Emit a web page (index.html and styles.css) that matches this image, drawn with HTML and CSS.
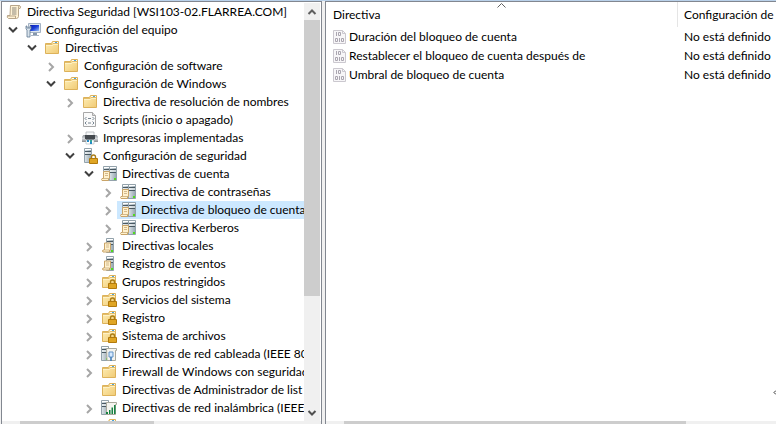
FILE: index.html
```html
<!DOCTYPE html>
<html lang="es">
<head>
<meta charset="utf-8">
<title>Editor de directivas</title>
<link rel="stylesheet" href="styles.css">
</head>
<body>
<svg class="defs" aria-hidden="true">
  <defs>
    <linearGradient id="gold" x1="0" y1="0" x2="1" y2="1"><stop offset="0" stop-color="#fff0b8"/><stop offset="1" stop-color="#f0ca74"/></linearGradient>
    <linearGradient id="steel" x1="0" y1="0" x2="1" y2="0"><stop offset="0" stop-color="#dfe7eb"/><stop offset="1" stop-color="#94a4ae"/></linearGradient>
    <linearGradient id="silver" x1="0" y1="0" x2="0" y2="1"><stop offset="0" stop-color="#8d9297"/><stop offset=".5" stop-color="#d5d8db"/><stop offset="1" stop-color="#85898d"/></linearGradient>
    <linearGradient id="blue" x1="0" y1="0" x2="1" y2="1"><stop offset="0" stop-color="#0719b0"/><stop offset=".5" stop-color="#1c3fd8"/><stop offset="1" stop-color="#9cc4f8"/></linearGradient>
  </defs>
  <symbol id="open" viewBox="0 0 10 8"><path d="M1 1.500 5 5.500 9 1.500" fill="none" stroke="#404040" stroke-width="2"/></symbol>
  <symbol id="closed" viewBox="0 0 8 10"><path d="M2 1 6 5 2 9" fill="none" stroke="#a6a6a6" stroke-width="2"/></symbol>
  <symbol id="folder" viewBox="0 0 16 16">
    <path d="M1.500 3.500h6l1-2h6v12h-13z" fill="url(#gold)" stroke="#ddb25a"/>
    <path d="M9 2h5v1h-5z" fill="#fffdf4"/><path d="M11 2h2v1h-2z" fill="#4aa3dc"/>
    <path d="M2 4.500h6l1-1h5.500" fill="none" stroke="#e3bd6a"/><path d="M2 5.500h6.500l1-1h4.500" fill="none" stroke="#fff5cf" stroke-width=".8"/>
  </symbol>
  <symbol id="lock" viewBox="0 0 9 10">
    <path d="M2.500 5v-2a2 2 0 0 1 4 0v2" fill="none" stroke="#a97c16" stroke-width="1.400"/>
    <path d="M.5 4.500h8v5h-8z" fill="#efb52e" stroke="#b27a0c"/><path d="M1 6h7M1 8h7" stroke="#c98f18" stroke-width=".8"/>
  </symbol>
  <symbol id="lockfolder" viewBox="0 0 16 16"><use href="#folder" width="16" height="16"/><use href="#lock" x="7" y="5" width="9" height="10"/></symbol>
  <symbol id="tower" viewBox="0 0 8 15">
    <path d="M.5 .5h7v14h-7z" fill="url(#steel)" stroke="#93a2ab"/>
    <path d="M1 1h6v1h-6z" fill="#fff"/><path d="M1 3.500h6M1 6.500h6" stroke="#4a5962"/><path d="M1 5h6" stroke="#f4f7f8"/>
    <path d="M5 12h2v2h-2z" fill="#50dc1e"/>
  </symbol>
  <symbol id="sheet" viewBox="0 0 9 10">
    <path d="M2.500 .5h6v7h-1v2h-6.500q-1-1 0-2h1.500z" fill="#fff1cd" stroke="#c9a468"/>
    <path d="M4 2.500h3M4 4.500h3M3 7.500h4" stroke="#d3b98c"/>
  </symbol>
  <symbol id="servers" viewBox="0 0 16 16"><use href="#tower" x="2" y="0" width="8" height="15"/><use href="#tower" x="8" y="0" width="8" height="15"/><use href="#sheet" x="0" y="5" width="9" height="10"/></symbol>
  <symbol id="server" viewBox="0 0 16 16"><use href="#tower" x="5" y="0" width="8" height="15"/><use href="#sheet" x="1" y="4" width="9" height="11"/></symbol>
  <symbol id="lockserver" viewBox="0 0 16 16"><use href="#tower" x="2" y="0" width="8" height="15"/><use href="#lock" x="7" y="6" width="9" height="10"/></symbol>
  <symbol id="scroll" viewBox="0 0 16 16">
    <path d="M4.500 1.500h9q2 1 .5 3h-1.500v8q-.5 2-2 2h-8q-2-1-1-3h2.500z" fill="#fff2d4" stroke="#b9a68a"/>
    <path d="M12.500 4.500v-2q.5-1 1.500-.5M1.500 12h8v2" fill="none" stroke="#b9a68a"/>
    <path d="M6 4h4.500M6 6h4.500M6 8h4.500M6 10h4.500" stroke="#8c877c"/>
  </symbol>
  <symbol id="computer" viewBox="0 0 16 16">
    <path d="M3.500 1.500h12v9h-12z" fill="#dfe7ef" stroke="#a4b2c3"/><path d="M5 3h9v6h-9z" fill="url(#blue)"/>
    <path d="M8 11h4v2h-4z" fill="#8698ac"/><path d="M6 13h8v1h-8z" fill="#a9b6c5"/>
    <path d="M1 4v3l1 1v7h3v-7l1-1v-3h-1v2h-3v-2z" fill="#d9e3ec" stroke="#617a93" stroke-width=".8"/>
  </symbol>
  <symbol id="script" viewBox="0 0 16 16">
    <path d="M1.500 .5h9l3 3v11h-12z" fill="#fafafa" stroke="#a8a8a8"/><path d="M10.500 .5v3h3" fill="#ddd" stroke="#a8a8a8"/>
    <path d="M4.500 5 3 6.500 4.500 8M10.500 5 12 6.500 10.500 8M4.500 9.500 3 11 4.500 12.500M10.500 9.500 12 11 10.500 12.500M6 6.500h3M6 11h3" fill="none" stroke="#687784" stroke-width=".9"/>
  </symbol>
  <symbol id="printer" viewBox="0 0 16 16">
    <path d="M0 6.500 1.500 5h13L16 6.500V12H0z" fill="url(#silver)"/>
    <path d="M4 2h8v4H4z" fill="#f6f7f8" stroke="#b0b4b8" stroke-width=".8"/>
    <path d="M3 5h10v4H3z" fill="#44494e"/><path d="M4 9h8v1H4z" fill="#6d7378"/>
    <path d="M4 10h8v4H4z" fill="#fff" stroke="#a9b5bd" stroke-width=".6"/><path d="M5 10h2v2H5zM8 12h2v2H8z" fill="#238bc5"/><path d="M8 10h2v2H8z" fill="#31a59a"/>
  </symbol>
  <symbol id="wired" viewBox="0 0 16 16">
    <use href="#tower" x="0" y="0" width="8" height="15"/><path d="M5.500 2.500h10v2h-1v10h-8.500z" fill="#f4f4ef" stroke="#aaa99d"/>
    <path d="M8 6h4v5h-4z" fill="#d6eaff" stroke="#6292c5"/><path d="M10 11v4" stroke="#3977b7" stroke-width="1.500"/>
  </symbol>
  <symbol id="wireless" viewBox="0 0 16 16">
    <use href="#tower" x="0" y="0" width="8" height="15"/><path d="M5.500 2.500h10v2h-1v10h-9z" fill="#f4f4ef" stroke="#aaa99d"/>
    <path d="M5 12h2v2h-2zM8 10h1.500v4h-1.500zM10.500 7.500h1.500v6.500h-1.500zM13 5h1.500v9h-1.500z" fill="#168342"/>
  </symbol>
  <symbol id="binary" viewBox="0 0 14 14">
    <path d="M.5 .5h9l3 3v10h-12z" fill="#f7f6f8" stroke="#cbc8cf"/><path d="M9.500 .5v3h3" fill="none" stroke="#cbc8cf"/>
    <path d="M3.500 2v4M5.500 2.500h2v3h-2zM2.500 8.500h2v3h-2zM6.500 8v4M8.500 8.500h2v3h-2z" fill="none" stroke="#aaa6b0"/>
  </symbol>
</svg>

<main class="console">
  <section class="pane tree-pane" aria-label="Árbol de consola">
    <div class="pane-body">
      <nav class="tree">
        <div class="row root"><svg class="icon"><use href="#scroll"/></svg><span>Directiva Seguridad [WSI103-02.FLARREA.COM]</span></div>
        <ul>
          <li><div class="row"><button class="toggle" aria-label="Contraer"><svg class="down"><use href="#open"/></svg></button><a href="#" class="node"><svg class="icon"><use href="#computer"/></svg>Configuración del equipo</a></div>
          <ul>
            <li><div class="row"><button class="toggle" aria-label="Contraer"><svg class="down"><use href="#open"/></svg></button><a href="#" class="node"><svg class="icon"><use href="#folder"/></svg>Directivas</a></div>
            <ul>
              <li><div class="row"><button class="toggle" aria-label="Expandir"><svg class="right"><use href="#closed"/></svg></button><a href="#" class="node"><svg class="icon"><use href="#folder"/></svg>Configuración de software</a></div></li>
              <li><div class="row"><button class="toggle" aria-label="Contraer"><svg class="down"><use href="#open"/></svg></button><a href="#" class="node"><svg class="icon"><use href="#folder"/></svg>Configuración de Windows</a></div>
              <ul>
                <li><div class="row"><button class="toggle" aria-label="Expandir"><svg class="right"><use href="#closed"/></svg></button><a href="#" class="node"><svg class="icon"><use href="#folder"/></svg>Directiva de resolución de nombres</a></div></li>
                <li><div class="row"><span class="toggle"></span><a href="#" class="node"><svg class="icon"><use href="#script"/></svg>Scripts (inicio o apagado)</a></div></li>
                <li><div class="row"><button class="toggle" aria-label="Expandir"><svg class="right"><use href="#closed"/></svg></button><a href="#" class="node"><svg class="icon"><use href="#printer"/></svg>Impresoras implementadas</a></div></li>
                <li><div class="row"><button class="toggle" aria-label="Contraer"><svg class="down"><use href="#open"/></svg></button><a href="#" class="node"><svg class="icon"><use href="#lockserver"/></svg>Configuración de seguridad</a></div>
                <ul>
                  <li><div class="row"><button class="toggle" aria-label="Contraer"><svg class="down"><use href="#open"/></svg></button><a href="#" class="node"><svg class="icon"><use href="#servers"/></svg>Directivas de cuenta</a></div>
                  <ul>
                    <li><div class="row"><button class="toggle" aria-label="Expandir"><svg class="right"><use href="#closed"/></svg></button><a href="#" class="node"><svg class="icon"><use href="#servers"/></svg>Directiva de contraseñas</a></div></li>
                    <li><div class="row"><button class="toggle" aria-label="Expandir"><svg class="right"><use href="#closed"/></svg></button><a href="#" class="node selected" aria-current="true"><svg class="icon"><use href="#servers"/></svg>Directiva de bloqueo de cuenta</a></div></li>
                    <li><div class="row"><button class="toggle" aria-label="Expandir"><svg class="right"><use href="#closed"/></svg></button><a href="#" class="node"><svg class="icon"><use href="#servers"/></svg>Directiva Kerberos</a></div></li>
                  </ul></li>
                  <li><div class="row"><button class="toggle" aria-label="Expandir"><svg class="right"><use href="#closed"/></svg></button><a href="#" class="node"><svg class="icon"><use href="#server"/></svg>Directivas locales</a></div></li>
                  <li><div class="row"><button class="toggle" aria-label="Expandir"><svg class="right"><use href="#closed"/></svg></button><a href="#" class="node"><svg class="icon"><use href="#server"/></svg>Registro de eventos</a></div></li>
                  <li><div class="row"><button class="toggle" aria-label="Expandir"><svg class="right"><use href="#closed"/></svg></button><a href="#" class="node"><svg class="icon"><use href="#lockfolder"/></svg>Grupos restringidos</a></div></li>
                  <li><div class="row"><button class="toggle" aria-label="Expandir"><svg class="right"><use href="#closed"/></svg></button><a href="#" class="node"><svg class="icon"><use href="#lockfolder"/></svg>Servicios del sistema</a></div></li>
                  <li><div class="row"><button class="toggle" aria-label="Expandir"><svg class="right"><use href="#closed"/></svg></button><a href="#" class="node"><svg class="icon"><use href="#lockfolder"/></svg>Registro</a></div></li>
                  <li><div class="row"><button class="toggle" aria-label="Expandir"><svg class="right"><use href="#closed"/></svg></button><a href="#" class="node"><svg class="icon"><use href="#lockfolder"/></svg>Sistema de archivos</a></div></li>
                  <li><div class="row"><button class="toggle" aria-label="Expandir"><svg class="right"><use href="#closed"/></svg></button><a href="#" class="node"><svg class="icon"><use href="#wired"/></svg>Directivas de red cableada (IEEE 80</a></div></li>
                  <li><div class="row"><button class="toggle" aria-label="Expandir"><svg class="right"><use href="#closed"/></svg></button><a href="#" class="node"><svg class="icon"><use href="#folder"/></svg>Firewall de Windows con seguridad</a></div></li>
                  <li><div class="row"><span class="toggle"></span><a href="#" class="node"><svg class="icon"><use href="#folder"/></svg>Directivas de Administrador de list</a></div></li>
                  <li><div class="row"><button class="toggle" aria-label="Expandir"><svg class="right"><use href="#closed"/></svg></button><a href="#" class="node"><svg class="icon"><use href="#wireless"/></svg>Directivas de red inalámbrica (IEEE</a></div></li>
                  <li><div class="row"><span class="toggle"></span><a href="#" class="node" aria-label="Carpeta"><svg class="icon"><use href="#folder"/></svg></a></div></li>
                </ul></li>
              </ul></li>
            </ul></li>
          </ul></li>
        </ul>
      </nav>
      <div class="vscroll">
        <button class="arrow" aria-label="Subir"><svg viewBox="0 0 10 8"><path d="M1.500 6 5 2.500 8.500 6" fill="none" stroke="#606060" stroke-width="2"/></svg></button>
        <div class="track"><div class="thumb"></div></div>
        <button class="arrow" aria-label="Bajar"><svg viewBox="0 0 10 8"><path d="M1.500 2 5 5.500 8.500 2" fill="none" stroke="#505050" stroke-width="2"/></svg></button>
      </div>
    </div>
    <div class="hscroll"><div class="thumb"></div></div>
  </section>

  <section class="pane list-pane" aria-label="Directivas">
    <div class="list">
      <table>
        <colgroup><col class="name"><col></colgroup>
        <thead><tr><th>Directiva<svg class="sort" viewBox="0 0 9 5"><path d="M.5 4.500 4.500 .5 8.500 4.500" fill="none" stroke="#606060"/></svg></th><th>Configuración de</th></tr></thead>
        <tbody>
          <tr><td><div class="cell"><svg class="mini"><use href="#binary"/></svg>Duración del bloqueo de cuenta</div></td><td>No está definido</td></tr>
          <tr><td><div class="cell"><svg class="mini"><use href="#binary"/></svg>Restablecer el bloqueo de cuenta después de</div></td><td>No está definido</td></tr>
          <tr><td><div class="cell"><svg class="mini"><use href="#binary"/></svg>Umbral de bloqueo de cuenta</div></td><td>No está definido</td></tr>
        </tbody>
      </table>
      <svg class="edge" viewBox="0 0 3 5"><path d="M3 .5 1 2.500 3 4.500" fill="none" stroke="#333"/></svg>
    </div>
    <div class="hscroll"><div class="thumb"></div></div>
  </section>
</main>
</body>
</html>
```
FILE: styles.css
```css
* { box-sizing: border-box; }
body {
  margin: 0;
  height: 100vh;
  overflow: hidden;
  background: #f0f0f0;
  color: #000;
  font: 12px/18px Lato, "Open Sans", sans-serif;
}
.defs { position: absolute; width: 0; height: 0; }
button { padding: 0; border: 0; background: none; }
a { color: inherit; text-decoration: none; }
ul { list-style: none; margin: 0; padding: 0; }
svg { flex: none; }

.console {
  display: grid;
  grid-template-columns: minmax(0, 321fr) minmax(0, 451fr);
  gap: 3px;
  height: 100%;
  padding-left: 1px;
  border-top: 1px solid #b9d1ea;
}
.pane {
  display: flex;
  flex-direction: column;
  min-width: 0;
  min-height: 0;
  background: #fff;
  border: 1px solid #828790;
  border-bottom: 0;
}
.list-pane { border-right: 0; }
.pane-body { display: flex; flex: 1; min-height: 0; padding: 1px 1px 0 0; }

.tree { flex: 1; min-width: 0; overflow: hidden; }
.tree > ul { padding-left: 2px; }
.tree li ul { padding-left: 19px; }
.row { display: flex; height: 18px; white-space: nowrap; }
.root { align-items: center; gap: 5px; padding-left: 4px; }
.toggle { display: flex; flex: none; align-items: center; justify-content: center; width: 18px; }
.down { width: 10px; height: 8px; }
.right { width: 8px; height: 10px; margin-top: 2px; }
.node { display: flex; flex: 1; align-items: center; gap: 5px; padding-left: 3px; }
.selected { background: #cce8ff; }
.icon { width: 16px; height: 16px; }

.vscroll { display: flex; flex: none; flex-direction: column; width: 16px; background: #f0f0f0; }
.arrow { display: flex; align-items: center; justify-content: center; height: 17px; }
.arrow svg { width: 10px; height: 8px; }
.track { flex: 1; }
.vscroll .thumb { height: 72%; background: #cdcdcd; }
.hscroll { flex: none; height: 3px; background: #f0f0f0; }
.hscroll .thumb { height: 100%; margin-left: 18px; background: #cdcdcd; }
.tree-pane .hscroll .thumb { width: 42%; }
.list-pane .hscroll .thumb { width: 76%; }

.list { position: relative; flex: 1; min-height: 0; overflow: hidden; }
table { width: 100%; table-layout: fixed; border-collapse: separate; border-spacing: 0; white-space: nowrap; }
.name { width: 78%; }
th, td { padding: 0 0 0 7px; font-weight: normal; text-align: left; }
th { position: relative; height: 25px; }
th + th { border-left: 1px solid #e5e5e5; padding-left: 6px; }
td { height: 19px; }
.cell { display: flex; align-items: center; gap: 2px; }
.mini { width: 14px; height: 14px; }
.sort { position: absolute; top: 1px; left: calc(50% - 5px); width: 9px; height: 5px; }
.edge { position: absolute; right: 0; bottom: 26px; width: 3px; height: 5px; }
```
